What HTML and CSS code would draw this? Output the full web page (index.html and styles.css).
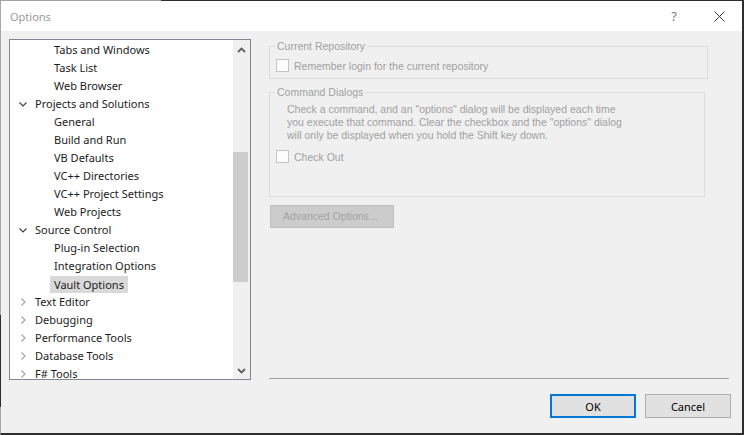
FILE: index.html
```html
<!DOCTYPE html>
<html>
<head>
<meta charset="utf-8">
<title>Options</title>
<link rel="stylesheet" href="styles.css">
</head>
<body>
<div class="dialog">
  <div class="titlebar">
    <span class="title">Options</span>
    <span class="help">?</span>
    <svg class="close" width="11" height="11" viewBox="0 0 11 11"><path d="M0.5 0.5 L10.5 10.5 M10.5 0.5 L0.5 10.5" stroke="#3a3a3a" stroke-width="1" fill="none"/></svg>
  </div>
  <div class="main">
    <div class="tree">
      <div class="list">
        <div class="row l2">Tabs and Windows</div>
        <div class="row l2">Task List</div>
        <div class="row l2">Web Browser</div>
        <div class="row l1"><span class="arrow"><svg width="10" height="10" viewBox="0 0 10 10"><path d="M1.5 3.5 L5 7 L8.5 3.5" class="open"/></svg></span>Projects and Solutions</div>
        <div class="row l2">General</div>
        <div class="row l2">Build and Run</div>
        <div class="row l2">VB Defaults</div>
        <div class="row l2">VC++ Directories</div>
        <div class="row l2">VC++ Project Settings</div>
        <div class="row l2">Web Projects</div>
        <div class="row l1"><span class="arrow"><svg width="10" height="10" viewBox="0 0 10 10"><path d="M1.5 3.5 L5 7 L8.5 3.5" class="open"/></svg></span>Source Control</div>
        <div class="row l2">Plug-in Selection</div>
        <div class="row l2">Integration Options</div>
        <div class="row l2"><span class="selected">Vault Options</span></div>
        <div class="row l1"><span class="arrow"><svg width="10" height="10" viewBox="0 0 10 10"><path d="M3.5 1.5 L7 5 L3.5 8.5" class="shut"/></svg></span>Text Editor</div>
        <div class="row l1"><span class="arrow"><svg width="10" height="10" viewBox="0 0 10 10"><path d="M3.5 1.5 L7 5 L3.5 8.5" class="shut"/></svg></span>Debugging</div>
        <div class="row l1"><span class="arrow"><svg width="10" height="10" viewBox="0 0 10 10"><path d="M3.5 1.5 L7 5 L3.5 8.5" class="shut"/></svg></span>Performance Tools</div>
        <div class="row l1"><span class="arrow"><svg width="10" height="10" viewBox="0 0 10 10"><path d="M3.5 1.5 L7 5 L3.5 8.5" class="shut"/></svg></span>Database Tools</div>
        <div class="row l1"><span class="arrow"><svg width="10" height="10" viewBox="0 0 10 10"><path d="M3.5 1.5 L7 5 L3.5 8.5" class="shut"/></svg></span>F# Tools</div>
      </div>
      <div class="scrollbar">
        <div class="sb-btn up"><svg width="9" height="6" viewBox="0 0 9 6"><path d="M1 5 L4.5 1.5 L8 5" class="sb-arrow"/></svg></div>
        <div class="track"><div class="thumb"></div></div>
        <div class="sb-btn down"><svg width="9" height="6" viewBox="0 0 9 6"><path d="M1 1 L4.5 4.5 L8 1" class="sb-arrow"/></svg></div>
      </div>
    </div>
    <div class="panel">
      <fieldset class="group g1">
        <legend>Current Repository</legend>
        <div class="check"><span class="box"></span><span>Remember login for the current repository</span></div>
      </fieldset>
      <fieldset class="group g2">
        <legend>Command Dialogs</legend>
        <p class="desc">Check a command, and an "options" dialog will be displayed each time<br>you execute that command. Clear the checkbox and the "options" dialog<br>will only be displayed when you hold the Shift key down.</p>
        <div class="check co"><span class="box"></span><span>Check Out</span></div>
      </fieldset>
      <div class="adv">Advanced Options...</div>
      <div class="separator"></div>
    </div>
  </div>
  <div class="footer">
    <div class="btn ok">OK</div>
    <div class="btn">Cancel</div>
  </div>
</div>
</body>
</html>
```
FILE: styles.css
```css
html, body {
  margin: 0;
  padding: 0;
  background: #2e2e2e;
  overflow: hidden;
}

.dialog {
  position: relative;
  width: 744px;
  height: 435px;
  box-sizing: border-box;
  border-top: 1px solid #2e2e2e;
  border-right: 2px solid #2e2e2e;
  border-bottom: 2px solid #2e2e2e;
  border-left: 1px solid #a8a8a8;
  background: #f0f0f0;
  display: flex;
  flex-direction: column;
  font-family: "Noto Sans", sans-serif;
  font-size: 11px;
  color: #1b1b1b;
}

.dialog::before {
  content: "";
  position: absolute;
  top: -1px;
  left: -1px;
  width: 161px;
  height: 1px;
  background: #a0a0a0;
}

.dialog::after {
  content: "";
  position: absolute;
  top: 314px;
  left: -1px;
  width: 1px;
  height: 92px;
  background: #2e2e2e;
}

.titlebar {
  height: 30px;
  background: #ffffff;
  display: flex;
  align-items: center;
  padding-left: 9px;
  flex: none;
}

.title {
  color: #9a9a9a;
  font-size: 11px;
}

.help {
  margin-left: auto;
  color: #7c7c7c;
  font-size: 13px;
  line-height: 14px;
  margin-top: -1px;
}

.close {
  margin-left: 37px;
  margin-right: 17px;
  margin-top: 0;
}

.main {
  display: flex;
  padding: 7px 0 0 8px;
  flex: none;
}

.tree {
  margin-top: 1px;
  width: 242px;
  height: 341px;
  box-sizing: border-box;
  border: 1px solid #828790;
  background: #ffffff;
  display: flex;
  overflow: hidden;
}

.list {
  flex: 1;
  padding-top: 1px;
  overflow: hidden;
}

.row {
  height: 18px;
  line-height: 18px;
  white-space: nowrap;
  display: flex;
  align-items: center;
}

.row.l1 {
  padding-left: 7px;
}

.row.l2 {
  padding-left: 44px;
}

.arrow {
  width: 18px;
  height: 18px;
  display: flex;
  align-items: center;
}

.arrow svg {
  margin-left: 1px;
}

.arrow path {
  fill: none;
  stroke-width: 1.2;
}

.arrow .open {
  stroke: #444444;
}

.arrow .shut {
  stroke: #a6a6a6;
}

.selected {
  background: #d9d9d9;
  padding: 0 4px;
  margin-left: -4px;
  line-height: 17px;
  margin-top: 1px;
}

.scrollbar {
  width: 17px;
  background: #f0f0f0;
  display: flex;
  flex-direction: column;
  flex: none;
}

.sb-btn {
  height: 17px;
  flex: none;
  display: flex;
  justify-content: center;
}

.sb-btn.up {
  align-items: flex-start;
  padding-top: 0;
}

.sb-btn.up svg {
  margin-top: 7px;
}

.sb-btn.down svg {
  margin-top: 6px;
}

.sb-arrow {
  fill: none;
  stroke: #606060;
  stroke-width: 1.8;
}

.track {
  flex: 1;
}

.thumb {
  margin-top: 95px;
  width: 15px;
  height: 130px;
  background: #cdcdcd;
}

.panel {
  margin-left: 18px;
  width: 460px;
  height: 341px;
  display: flex;
  flex-direction: column;
  font-family: "Liberation Sans", Arial, sans-serif;
  font-size: 10.5px;
  color: #a0a0a0;
}

.group {
  margin: 0;
  padding: 0;
  border: 1px solid #dcdcdc;
  min-width: 0;
  box-sizing: border-box;
}

.group legend {
  margin-left: 5px;
  padding: 0 2px;
  line-height: 16px;
  height: 16px;
}

.g1 {
  width: 439px;
  padding-bottom: 6px;
}

.g2 {
  width: 436px;
  margin-top: 5px;
  padding-bottom: 33px;
}

.check {
  display: flex;
  align-items: center;
  height: 13px;
  margin-top: 5px;
  margin-left: 6px;
}

.check.co {
  margin-top: 8px;
}

.box {
  width: 13px;
  height: 13px;
  box-sizing: border-box;
  border: 1px solid #c4c4c4;
  background: #fcfcfc;
  margin-right: 5px;
  flex: none;
}

.desc {
  margin: 3px 0 0 17px;
  line-height: 13px;
}

.adv {
  margin-top: 8px;
  margin-left: 1px;
  width: 124px;
  height: 23px;
  box-sizing: border-box;
  background: #cccccc;
  border: 1px solid #bfbfbf;
  line-height: 21px;
  padding-left: 12px;
  color: #a3a3a3;
}

.separator {
  margin-top: auto;
  height: 1px;
  background: #a0a0a0;
  flex: none;
}

.footer {
  display: flex;
  justify-content: flex-end;
  gap: 9px;
  padding: 14px 11px 0 0;
}

.btn {
  width: 86px;
  height: 24px;
  box-sizing: border-box;
  background: #e1e1e1;
  border: 1px solid #adadad;
  display: flex;
  align-items: center;
  justify-content: center;
  color: #000000;
  font-size: 11px;
}

.btn.ok {
  border: 2px solid #0078d7;
}
```
